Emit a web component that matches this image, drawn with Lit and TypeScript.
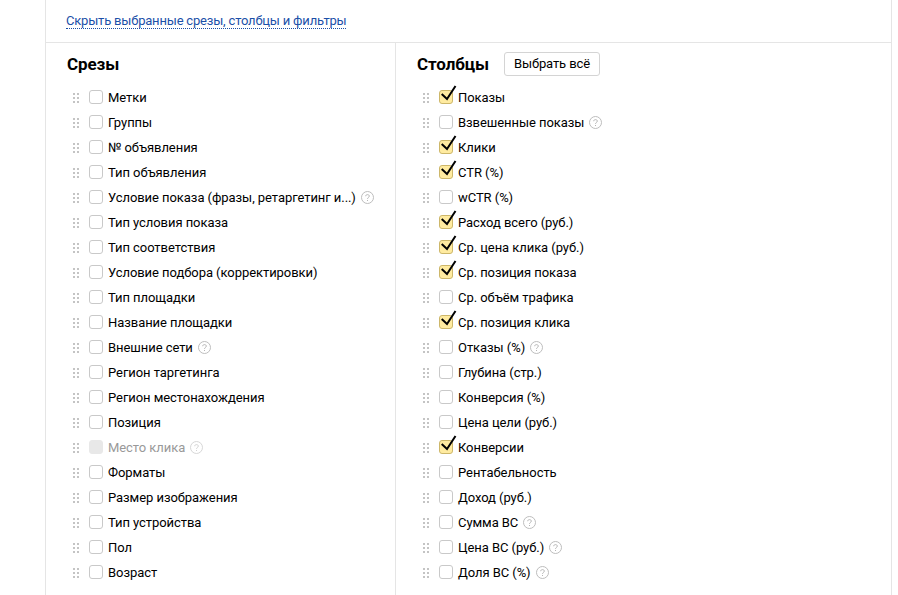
import { LitElement, html, svg, css } from "lit";
import { customElement } from "lit/decorators.js";

type Row = { t: string; on?: boolean; help?: boolean; dis?: boolean };
const left: Row[] = [
  { t: "Метки" }, { t: "Группы" }, { t: "№ объявления" }, { t: "Тип объявления" },
  { t: "Условие показа (фразы, ретаргетинг и...)", help: true }, { t: "Тип условия показа" },
  { t: "Тип соответствия" }, { t: "Условие подбора (корректировки)" }, { t: "Тип площадки" },
  { t: "Название площадки" }, { t: "Внешние сети", help: true }, { t: "Регион таргетинга" },
  { t: "Регион местонахождения" }, { t: "Позиция" }, { t: "Место клика", help: true, dis: true },
  { t: "Форматы" }, { t: "Размер изображения" }, { t: "Тип устройства" }, { t: "Пол" }, { t: "Возраст" },
];
const right: Row[] = [
  { t: "Показы", on: true }, { t: "Взвешенные показы", help: true }, { t: "Клики", on: true },
  { t: "CTR (%)", on: true }, { t: "wCTR (%)" }, { t: "Расход всего (руб.)", on: true },
  { t: "Ср. цена клика (руб.)", on: true }, { t: "Ср. позиция показа", on: true }, { t: "Ср. объём трафика" },
  { t: "Ср. позиция клика", on: true }, { t: "Отказы (%)", help: true }, { t: "Глубина (стр.)" },
  { t: "Конверсия (%)" }, { t: "Цена цели (руб.)" }, { t: "Конверсии", on: true }, { t: "Рентабельность" },
  { t: "Доход (руб.)" }, { t: "Сумма ВС", help: true }, { t: "Цена ВС (руб.)", help: true }, { t: "Доля ВС (%)", help: true },
];

@customElement("app-root")
export class AppRoot extends LitElement {
  static styles = css`
    :host { display: block; width: 898px; height: 595px; overflow: hidden; background: #fff;
      font-family: "Roboto", "Liberation Sans", sans-serif; font-size: 13px; color: #000; }
    .panel { margin-left: 45px; width: 847px; height: 595px; box-sizing: border-box;
      border-left: 1px solid #e5e5e5; border-right: 1px solid #e5e5e5; }
    .top { height: 43px; box-sizing: border-box; padding: 13px 0 0 20px; border-bottom: 1px solid #e5e5e5; line-height: 15px; }
    .link { color: #1b4fa8; border-bottom: 1px dotted #1b4fa8; display: inline-block; line-height: 15px; letter-spacing: -0.19px; }
    .cols { display: flex; height: 552px; }
    .col { box-sizing: border-box; padding: 0 0 0 21px; }
    .c1 { width: 350px; border-right: 1px solid #e5e5e5; }
    .c2 { flex: 1; }
    .head { display: flex; align-items: center; gap: 15px; height: 33px; margin-top: 4px; margin-bottom: 5px; }
    h3 { margin: 0; font-size: 17px; font-weight: 700; line-height: 20px; letter-spacing: -0.1px; }
    .btn { height: 24px; box-sizing: border-box; border: 1px solid #d4d4d4; border-radius: 3px; padding: 0 9px;
      display: flex; align-items: center; background: #fff; letter-spacing: -0.1px; }
    .row { display: flex; align-items: center; height: 25px; white-space: nowrap; letter-spacing: -0.06px; }
    .grip { width: 6px; height: 10px; margin: 1px 10px 0 6px; display: block; flex: none; }
    .box { position: relative; box-sizing: border-box; width: 14px; height: 14px; border: 1px solid #c9c9c9; border-radius: 3px; margin: 0 5px 1px 0; flex: none; }
    .on { background: #ffeba0; border-color: #cdb76a; }
    .dis .box { background: #e8e8e8; border-color: #e8e8e8; }
    .dis { color: #999; }
    .check { position: absolute; left: -1px; top: -7px; width: 18px; height: 18px; }
    .q { width: 13px; height: 13px; margin: 0 0 1px 5px; display: block; }
    .dis .q { opacity: .6; }
  `;

  private grip() {
    const dots = [0, 4, 8].flatMap((y) => [0, 4].map((x) => svg`<rect x=${x} y=${y} width="2" height="2" fill="#c4c4c4"></rect>`));
    return html`<svg class="grip" viewBox="0 0 6 10">${dots}</svg>`;
  }
  private q() {
    return html`<svg class="q" viewBox="0 0 13 13"><circle cx="6.5" cy="6.5" r="6" fill="none" stroke="#bdbdbd"></circle>
      <path d="M4.7 5.2c0-1 .8-1.6 1.8-1.6s1.8.6 1.8 1.5c0 1.4-1.8 1.4-1.8 2.7" fill="none" stroke="#b5b5b5"></path>
      <rect x="6" y="9" width="1" height="1" fill="#b5b5b5"></rect></svg>`;
  }
  private row(r: Row) {
    return html`<div class="row ${r.dis ? "dis" : ""}">
      ${this.grip()}
      <span class="box ${r.on ? "on" : ""}">${r.on
        ? html`<svg class="check" viewBox="0 0 18 18"><path d="M2.7 10L8 15L16.5 2" fill="none" stroke="#000" stroke-width="2"></path></svg>`
        : ""}</span>
      <span>${r.t}</span>${r.help ? this.q() : ""}
    </div>`;
  }
  render() {
    return html`<div class="panel">
      <div class="top"><span class="link">Скрыть выбранные срезы, столбцы и фильтры</span></div>
      <div class="cols">
        <div class="col c1">
          <div class="head"><h3>Срезы</h3></div>
          ${left.map((r) => this.row(r))}
        </div>
        <div class="col c2">
          <div class="head"><h3>Столбцы</h3><div class="btn">Выбрать всё</div></div>
          ${right.map((r) => this.row(r))}
        </div>
      </div>
    </div>`;
  }
}
